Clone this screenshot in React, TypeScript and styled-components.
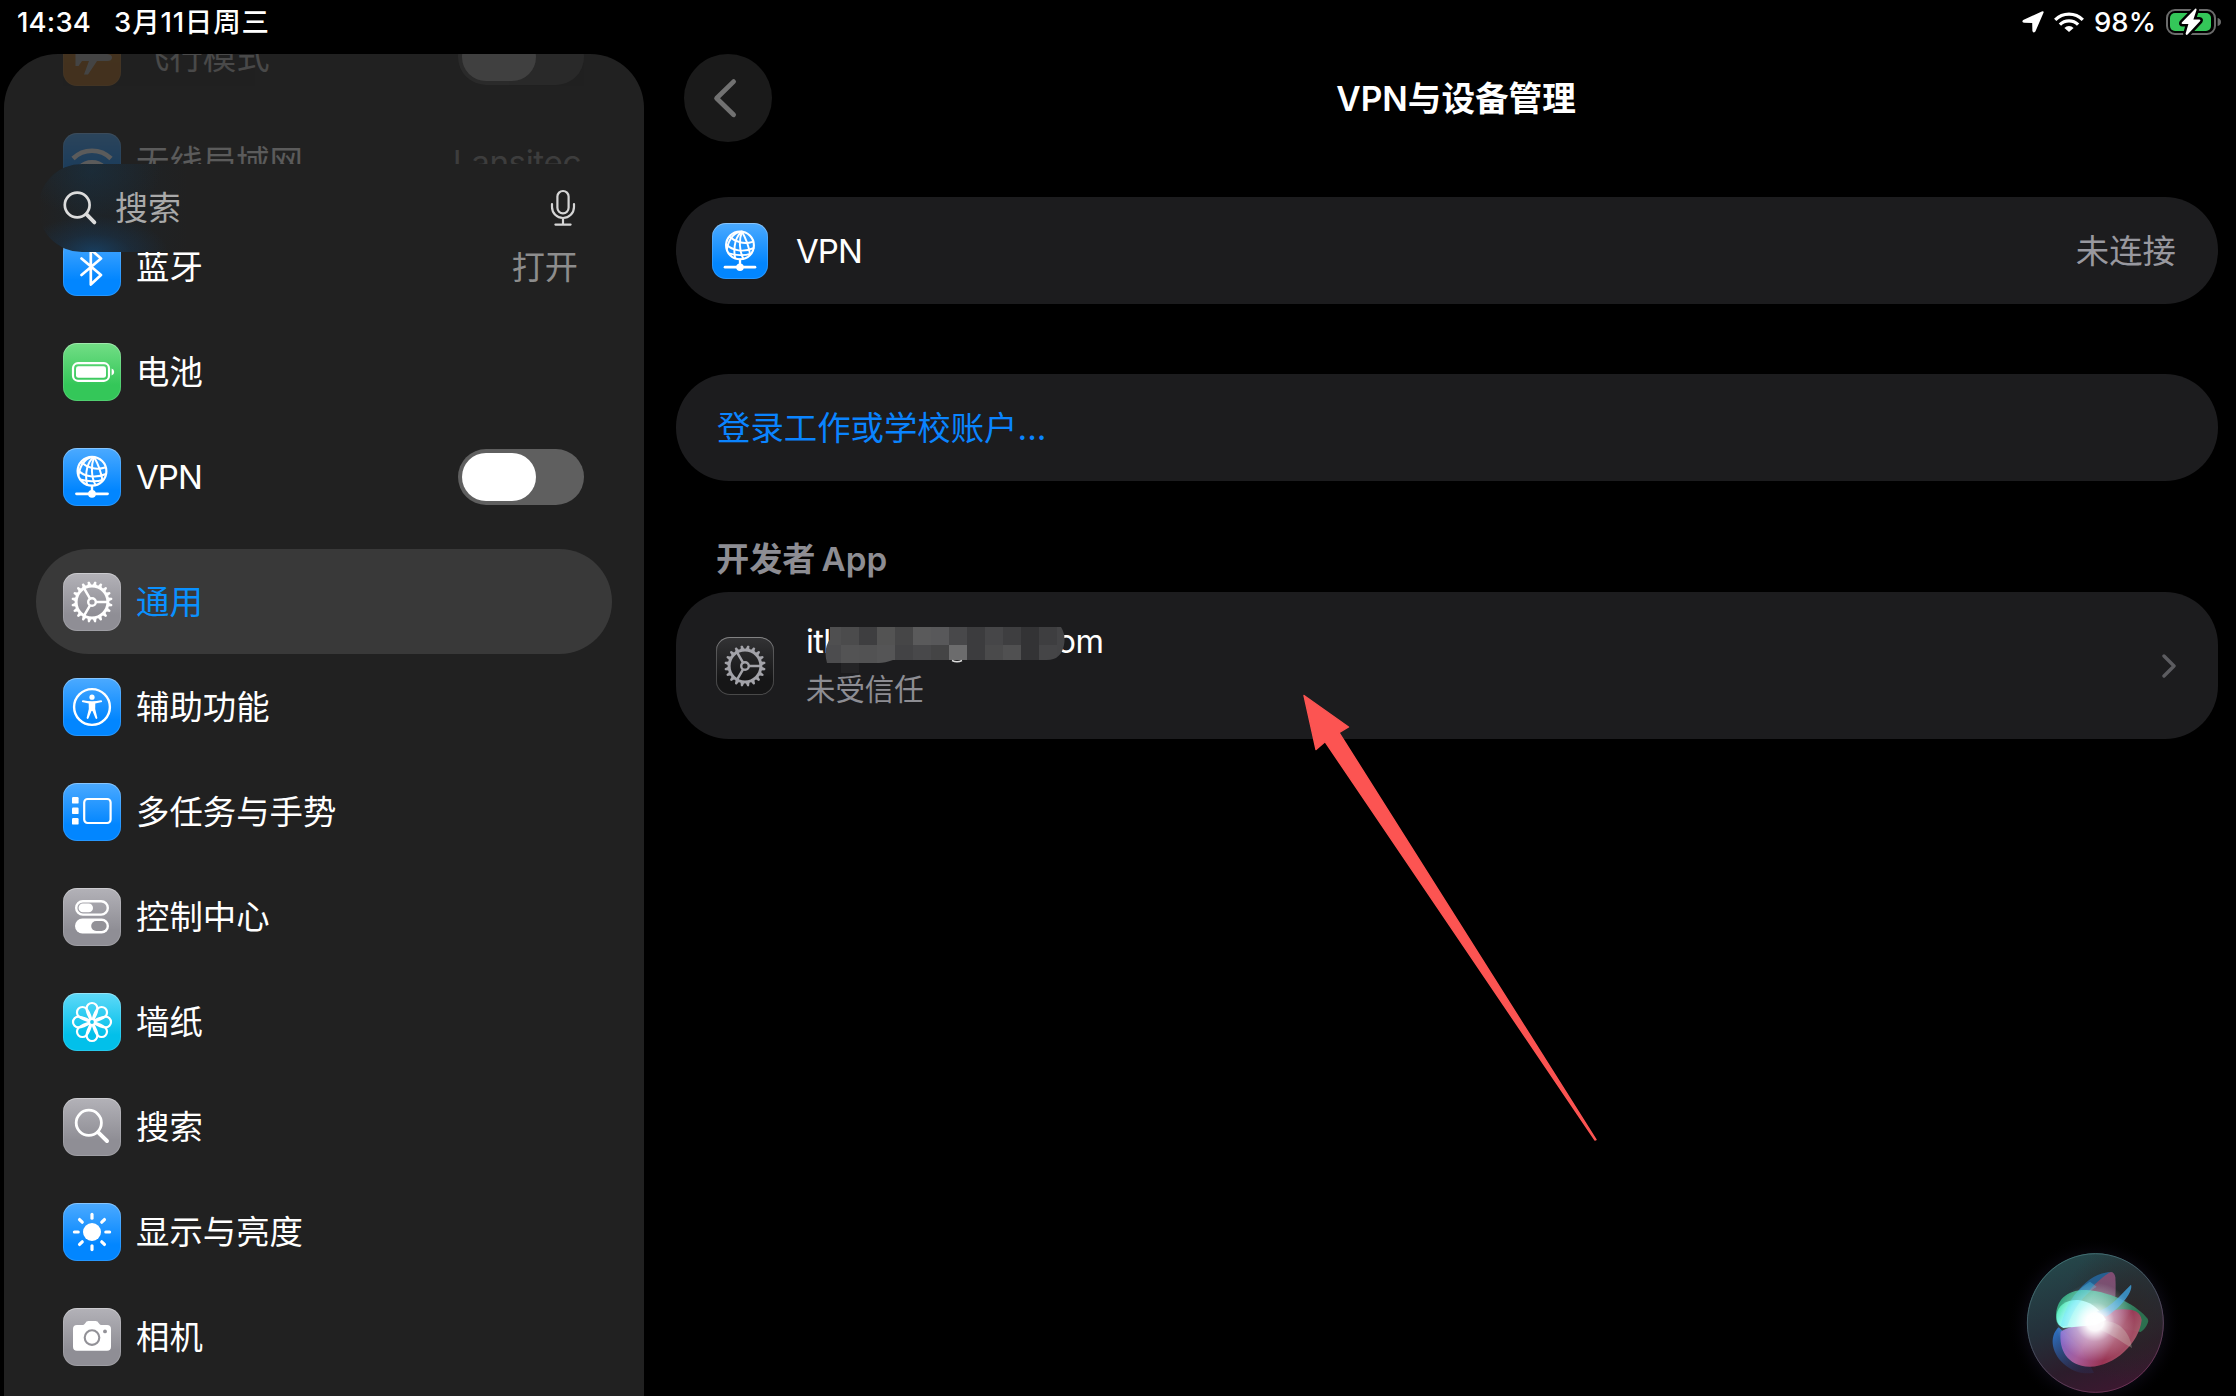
import React from 'react';
import styled, { createGlobalStyle, css } from 'styled-components';

const GlobalStyle = createGlobalStyle`
  * { box-sizing: border-box; }
  html, body { margin: 0; background: #000; }
  body {
    font-family: Inter, 'Noto Sans CJK SC', sans-serif;
    color: #fff;
    overflow: hidden;
  }
  svg { display: block; flex: none; }
`;

/* ---------- frame ---------- */

const Screen = styled.div`
  position: relative;
  width: 2236px;
  height: 1396px;
  background: #000;
  display: flex;
  flex-direction: column;
  overflow: hidden;
`;

const StatusBar = styled.header`
  height: 54px;
  flex: none;
  padding: 0 15px 10px 17px;
  display: flex;
  align-items: center;
  justify-content: space-between;
  font-size: 27.5px;
  font-weight: 500;
  line-height: 44px;
`;

const StatusGroup = styled.div<{ $gap: number }>`
  display: flex;
  align-items: center;
  gap: ${(p) => p.$gap}px;
  white-space: nowrap;
`;

const StatusText = styled.span<{ $spacing?: number }>`
  letter-spacing: ${(p) => p.$spacing ?? 0}px;
`;

const Body = styled.div`
  flex: 1;
  min-height: 0;
  display: flex;
  padding-left: 4px;
  gap: 32px;
`;

/* ---------- sidebar ---------- */

const Sidebar = styled.nav`
  position: relative;
  width: 640px;
  flex: none;
  background: #212121;
  border-radius: 54px 54px 0 0;
  overflow: hidden;
  padding: 0 32px;
`;

const SidebarList = styled.div`
  margin-top: -50px;
  display: flex;
  flex-direction: column;
`;

const Row = styled.div<{ $selected?: boolean; $dim?: number }>`
  height: 105px;
  flex: none;
  padding: 1px 28px 0 27px;
  display: flex;
  align-items: center;
  gap: 15px;
  opacity: ${(p) => p.$dim ?? 1};
  ${(p) =>
    p.$selected &&
    css`
      margin-top: 20px;
      border-radius: 53px;
      background: #393939;
      color: #0a91ff;
    `}
`;

const RowLabel = styled.span<{ $latin?: boolean; $faint?: boolean }>`
  flex: 1;
  font-size: ${(p) => (p.$latin ? 33 : 33.4)}px;
  line-height: 48px;
  white-space: nowrap;
  letter-spacing: ${(p) => (p.$latin ? '-0.9px' : '0')};
  opacity: ${(p) => (p.$faint ? 0.2 : 1)};
`;

const RowValue = styled.span<{ $latin?: boolean }>`
  font-size: 33.2px;
  line-height: 48px;
  color: #8d8d8d;
  padding-right: ${(p) => (p.$latin ? 3 : 6)}px;
  letter-spacing: ${(p) => (p.$latin ? '-0.4px' : '0')};
`;

const tints = {
  orange: ['#ff9f2e', '#f28a14'],
  blue: ['#4caaff', '#0286ff'],
  green: ['#73de86', '#34c759'],
  grey: ['#b3b2b8', '#8f8e95'],
  cyan: ['#5fd9f8', '#02c0ea'],
  dark: ['#333335', '#161617'],
};

const Tile = styled.div<{ $tint: keyof typeof tints; $size?: number; $faint?: boolean }>`
  width: ${(p) => p.$size ?? 58}px;
  height: ${(p) => p.$size ?? 58}px;
  flex: none;
  border-radius: 14px;
  opacity: ${(p) => (p.$faint ? 0.18 : 1)};
  background: linear-gradient(${(p) => tints[p.$tint][0]}, ${(p) => tints[p.$tint][1]} 72%);
  box-shadow:
    inset 0 0 0 1px rgba(255, 255, 255, ${(p) => (p.$tint === 'dark' ? 0.22 : 0.14)}),
    inset 0 1px 0 rgba(255, 255, 255, 0.22);
  svg { width: 100%; height: 100%; }
`;

const Track = styled.div<{ $faded?: boolean }>`
  width: 126px;
  height: 56px;
  border-radius: 28px;
  padding: 4px;
  background: ${(p) => (p.$faded ? '#2b2b2b' : '#5f5f5f')};
`;

const Knob = styled.div<{ $faded?: boolean }>`
  width: 74px;
  height: 48px;
  border-radius: 24px;
  background: ${(p) => (p.$faded ? '#444' : '#fff')};
`;

const SearchField = styled.div`
  position: absolute;
  left: 34px;
  right: 34px;
  top: 110px;
  height: 88px;
  border-radius: 44px;
  padding: 0 34px 0 25px;
  display: flex;
  align-items: center;
  background:
    radial-gradient(ellipse 74px 36px at 56px 100%, rgba(22, 72, 116, 0.7), rgba(22, 62, 100, 0.3) 50%, rgba(16, 68, 112, 0) 100%),
    radial-gradient(ellipse 70px 46px at 54px 8%, rgba(26, 50, 68, 0.55), rgba(26, 50, 68, 0) 100%),
    linear-gradient(90deg, rgba(26, 38, 48, 0) 0, rgba(26, 38, 48, 0.55) 50px, rgba(26, 38, 48, 0) 150px),
    #212121;
`;

const SearchText = styled.span`
  flex: 1;
  margin-left: 17px;
  font-size: 33px;
  line-height: 48px;
  color: #a9a9a9;
`;

/* ---------- detail pane ---------- */

const Detail = styled.main`
  width: 1542px;
  display: flex;
  flex-direction: column;
`;

const TitleBar = styled.div`
  height: 88px;
  flex: none;
  padding-left: 8px;
  display: grid;
  grid-template-columns: 88px 1fr 78px;
  align-items: center;
`;

const BackButton = styled.div`
  width: 88px;
  height: 88px;
  border-radius: 50%;
  background: #1a1a1a;
`;

const Title = styled.h1`
  margin: 2px 0 0;
  font-size: 33.6px;
  line-height: 48px;
  font-weight: 600;
  text-align: center;
`;

const Card = styled.section<{ $height: number; $top: number; $inset?: number }>`
  height: ${(p) => p.$height}px;
  margin-top: ${(p) => p.$top}px;
  flex: none;
  border-radius: 53px;
  background: #1c1c1e;
  display: flex;
  align-items: center;
  padding: 0 42px 0 ${(p) => p.$inset ?? 36}px;
`;

const CardLabel = styled.span`
  flex: 1;
  margin-left: 28px;
  font-size: 33px;
  line-height: 48px;
  letter-spacing: -0.9px;
`;

const CardValue = styled.span`
  font-size: 33.4px;
  line-height: 48px;
  color: #98989f;
`;

const LinkText = styled.span`
  margin-left: 5px;
  font-size: 33.4px;
  line-height: 48px;
  color: #0a84ff;
`;

const SectionTitle = styled.h2`
  margin: 54px 0 0 40px;
  height: 48px;
  display: flex;
  gap: 6px;
  font-size: 33.2px;
  line-height: 48px;
  font-weight: 600;
  color: #8d8d93;
`;

const DevInfo = styled.div`
  flex: 1;
  margin-left: 32px;
  display: flex;
  flex-direction: column;
`;

const DevName = styled.div`
  height: 48px;
  display: flex;
  font-size: 32.5px;
  line-height: 48px;
  letter-spacing: -0.6px;
`;

const MaskSlot = styled.div`
  width: 226px;
  height: 48px;
  svg { position: relative; left: -6px; top: 9px; }
`;

const DevStatus = styled.div`
  font-size: 29.4px;
  line-height: 48px;
  color: #8d8d93;
`;

const ArrowOverlay = styled.svg`
  position: absolute;
  left: 1300px;
  top: 690px;
`;

const SiriOverlay = styled.svg`
  position: absolute;
  left: 1980px;
  top: 1220px;
`;

/* ---------- glyphs ---------- */

const Glyph = ({ children }: { children: React.ReactNode }) => (
  <svg viewBox="0 0 58 58" fill="none" stroke="#fff" strokeLinecap="round" strokeLinejoin="round">
    {children}
  </svg>
);

const AirplaneGlyph = () => (
  <Glyph>
    <path
      d="M12.5 22 L15.5 22 L19 26 H26 L21 12 H25 L34 26 H44 Q49 26.5 49 29.5 Q49 33 44 33 H34 L25 46.5 H21 L26 33 H19 L15.5 38 H12.5 Z"
      fill="#fff"
      stroke="none"
    />
  </Glyph>
);

const WifiGlyph = () => (
  <Glyph>
    <g strokeWidth="4.6" strokeLinecap="butt">
      <path d="M10 25.5 A27 27 0 0 1 48 25.5" />
      <path d="M16.8 34.3 A17.4 17.4 0 0 1 41.2 34.3" />
    </g>
    <path d="M22.5 39.5 A9.2 9.2 0 0 1 35.5 39.5 L29 46 Z" fill="#fff" stroke="none" />
  </Glyph>
);

const BluetoothGlyph = () => (
  <Glyph>
    <path d="M18.5 20.5 L38 37 L27.8 46.5 V11.5 L38 20.5 L18.5 37" strokeWidth="2.7" />
  </Glyph>
);

const BatteryGlyph = () => (
  <Glyph>
    <rect x="10" y="20.2" width="36" height="17.6" rx="5" strokeWidth="2.2" />
    <rect x="13" y="23.2" width="30" height="11.6" rx="2.4" fill="#fff" stroke="none" />
    <path d="M48.6 25.5 Q51.2 26.4 51.2 29 Q51.2 31.6 48.6 32.5 Z" fill="#fff" stroke="none" />
  </Glyph>
);

const VpnGlyph = () => (
  <Glyph>
    <g strokeWidth="2">
      <circle cx="29" cy="23.2" r="14.4" strokeWidth="2.2" />
      <path d="M31 9 C25 13 21.5 24 24 36.5" />
      <path d="M31 9 C28 17 28 29 32.5 37" />
      <path d="M31 9 C34 14 38 24 39.5 32.5" />
      <path d="M31 9 C24 9 17.5 15 15.5 27" />
      <path d="M18.5 14.5 C24 19.5 33 22.5 42 19.5" />
      <path d="M14.8 22 C21 29 33 30.5 43 26" />
      <path d="M17.5 31.5 C24 33.5 34 34 39.5 32" />
    </g>
    <path d="M29 38 V45" strokeWidth="2.4" />
    <path d="M13.5 45.8 H44.5" strokeWidth="2.8" />
    <circle cx="29" cy="45.8" r="3.9" fill="#fff" stroke="none" />
  </Glyph>
);

const GearGlyph = ({ color = '#fff' }: { color?: string }) => (
  <svg viewBox="0 0 58 58" fill="none" stroke={color} strokeLinecap="round">
    <circle cx="29" cy="29" r="15.9" strokeWidth="3" />
    {Array.from({ length: 20 }, (_, i) => (
      <path
        key={i}
        d="M26.9 12.9 L28 8.8 Q29 7.8 30 8.8 L31.1 12.9 Z"
        fill={color}
        stroke="none"
        transform={`rotate(${i * 18 + 9} 29 29)`}
      />
    ))}
    <circle cx="29" cy="29" r="3.8" strokeWidth="2.4" />
    {[0, 120, 240].map((a) => (
      <path key={a} d="M33.5 29 H44" strokeWidth="2.5" transform={`rotate(${a} 29 29)`} />
    ))}
  </svg>
);

const AccessibilityGlyph = () => (
  <Glyph>
    <circle cx="29" cy="29" r="17.9" strokeWidth="2.4" />
    <circle cx="29" cy="19.2" r="2.6" fill="#fff" stroke="none" />
    <path
      d="M20 22.3 Q29 24 38 22.3 Q39.6 22.4 39 23.9 L32.3 25.6 L32.2 31 L34.4 40 Q33.8 41.4 32.6 40.6 L29.5 33 H28.5 L25.4 40.6 Q24.2 41.4 23.6 40 L25.8 31 L25.7 25.6 L19 23.9 Q18.4 22.4 20 22.3 Z"
      fill="#fff"
      stroke="none"
    />
  </Glyph>
);

const MultitaskGlyph = () => (
  <Glyph>
    <g fill="#fff" stroke="none">
      <rect x="9" y="14" width="6.6" height="6.6" rx="1.2" />
      <rect x="9" y="24.5" width="6.6" height="6.6" rx="1.2" />
      <rect x="9" y="35" width="6.6" height="6.6" rx="1.2" />
    </g>
    <rect x="21.2" y="16" width="26.4" height="24" rx="3.4" strokeWidth="2.2" />
  </Glyph>
);

const ControlGlyph = () => (
  <Glyph>
    <rect x="13.2" y="13.2" width="31.6" height="13.4" rx="6.7" strokeWidth="2.4" />
    <rect x="15.6" y="15.6" width="14.4" height="8.6" rx="4.3" fill="#fff" stroke="none" />
    <rect x="12" y="30.6" width="34" height="14.8" rx="7.4" fill="#fff" stroke="none" />
    <rect x="28.2" y="33" width="15.4" height="10" rx="5" fill="#929197" stroke="none" />
  </Glyph>
);

const WallpaperGlyph = () => (
  <Glyph>
    {Array.from({ length: 8 }, (_, i) => (
      <path
        key={i}
        d="M29 29 C26 24 23.6 20 23.6 15.4 A5.4 5.4 0 0 1 34.4 15.4 C34.4 20 32 24 29 29"
        strokeWidth="2.2"
        transform={`rotate(${i * 45} 29 29)`}
      />
    ))}
    <circle cx="29" cy="29" r="2.9" fill="#19c6ee" strokeWidth="2" />
  </Glyph>
);

const SearchGlyph = () => (
  <Glyph>
    <circle cx="25.8" cy="24.8" r="12.6" strokeWidth="2.8" />
    <path d="M35.2 34.4 L44 43" strokeWidth="4" />
  </Glyph>
);

const BrightnessGlyph = () => (
  <Glyph>
    <circle cx="29" cy="29" r="9" fill="#fff" stroke="none" />
    {Array.from({ length: 8 }, (_, i) => (
      <path key={i} d="M29 11.4 V15.2" strokeWidth="3.2" transform={`rotate(${i * 45} 29 29)`} />
    ))}
  </Glyph>
);

const CameraGlyph = () => (
  <Glyph>
    <path
      d="M14 17 H19.5 Q21 17 22 15.4 Q23.3 13 25.5 13 H32.5 Q34.7 13 36 15.4 Q37 17 38.5 17 H44 Q48 17 48 21 V38.8 Q48 42.8 44 42.8 H14 Q10 42.8 10 38.8 V21 Q10 17 14 17 Z"
      fill="#fff"
      stroke="none"
    />
    <circle cx="29" cy="29.6" r="7.3" stroke="#929197" strokeWidth="2.1" />
    <circle cx="42" cy="23.4" r="1.9" fill="#929197" stroke="none" />
  </Glyph>
);

const StatusIcons = {
  Location: () => (
    <svg width="22" height="22" viewBox="0 0 22 22">
      <path
        d="M21.6 1.6 L13.4 20.4 Q11.2 22.6 10.4 20 L10.2 12 L2 11.8 Q-0.8 11 1.2 9 L19.8 0.4 Q22 -0.2 21.6 1.6 Z"
        fill="#fff"
      />
    </svg>
  ),
  Wifi: () => (
    <svg width="30" height="20" viewBox="0 0 30 20" fill="none" stroke="#fff" strokeWidth="3.3">
      <path d="M1.2 7.8 A19.5 19.5 0 0 1 28.8 7.8" />
      <path d="M5.9 12.6 A12.8 12.8 0 0 1 24.1 12.6" />
      <path d="M10.4 16 A6.5 6.5 0 0 1 19.6 16 L15 20 Z" fill="#fff" stroke="none" />
    </svg>
  ),
  Battery: () => (
    <svg width="55" height="28" viewBox="0 0 55 28">
      <rect x="1" y="2" width="48" height="24" rx="8" fill="none" stroke="#6b6b6b" strokeWidth="2" />
      <rect x="4" y="5" width="41" height="18" rx="5" fill="#34c759" />
      <path d="M51.6 10 Q55 10.8 55 14 Q55 17.2 51.6 18 Z" fill="#6b6b6b" />
      <path
        d="M29.2 0.8 L15.8 14.6 Q15 16 16.6 16 H22.4 L19.6 25.8 Q20 27.6 21.6 26.6 L34.2 13 Q35 11.4 33.4 11.4 H27.4 L30.6 1.8 Q30.2 0 29.2 0.8 Z"
        fill="#fff"
        stroke="#000"
        strokeWidth="5"
        paintOrder="stroke"
      />
    </svg>
  ),
};

const maskRows = [
  ['#4f4f50', '#4b4b4c', '#3e3e40', '#535353', '#464647', '#5a5a5b', '#58585a', '#48484a', '#3c3c3e', '#464648', '#3e3e40', '#333335', '#3e3e40', '#444446'],
  ['#4c4c4e', '#535354', '#525253', '#555556', '#434345', '#48484a', '#444445', '#6c6c6d', '#3c3c3e', '#4a4a4b', '#505051', '#333335', '#454547', '#444446'],
];

const NameMask = () => (
  <svg width="242" height="50" viewBox="0 0 242 50">
    <defs>
      <clipPath id="maskShape">
        <path d="M5 0 H236 Q241 8 239 18 Q236 33 222 33 H68 Q60 36 54 36 H2 Q-2 22 5 12 Z" />
      </clipPath>
    </defs>
    <g clipPath="url(#maskShape)" shapeRendering="crispEdges">
      {maskRows.map((row, r) =>
        row.map((fill, c) => (
          <rect key={`${r}-${c}`} x={c * 18 - 2} y={r * 18} width="18" height="18" fill={fill} />
        )),
      )}
    </g>
    <rect x="16" y="36" width="18" height="10" fill="#242426" />
    <path d="M127 33.5 Q132 36 137 33.5" stroke="#ddd" strokeWidth="1.4" fill="none" />
  </svg>
);

const SiriOrb = () => (
  <SiriOverlay width="256" height="176" viewBox="0 0 768 528">
    <defs>
      <linearGradient id="orbFill" x1="0.3" y1="0" x2="0.65" y2="1">
        <stop offset="0" stopColor="#25484b" />
        <stop offset="0.45" stopColor="#24303a" />
        <stop offset="0.75" stopColor="#2c1c2b" />
        <stop offset="1" stopColor="#3c1830" />
      </linearGradient>
      <linearGradient id="orbRim" x1="0.2" y1="0" x2="0.7" y2="1">
        <stop offset="0" stopColor="#3f7676" />
        <stop offset="0.5" stopColor="#454b5c" />
        <stop offset="1" stopColor="#6b2e52" />
      </linearGradient>
      <radialGradient id="orbShade" cx="0.75" cy="0.42" r="0.5">
        <stop offset="0" stopColor="#2c2727" stopOpacity="0.9" />
        <stop offset="1" stopColor="#2c2727" stopOpacity="0" />
      </radialGradient>
      <radialGradient id="core">
        <stop offset="0" stopColor="#fff" />
        <stop offset="0.22" stopColor="#fff" stopOpacity="0.96" />
        <stop offset="0.5" stopColor="#fff" stopOpacity="0.42" />
        <stop offset="1" stopColor="#fff" stopOpacity="0" />
      </radialGradient>
      <linearGradient id="petalPink" x1="0" y1="0.2" x2="1" y2="0.6">
        <stop offset="0" stopColor="#7d6fe0" />
        <stop offset="0.4" stopColor="#b0609f" />
        <stop offset="0.7" stopColor="#a03556" />
        <stop offset="1" stopColor="#b46a78" />
      </linearGradient>
      <linearGradient id="petalMint" x1="0" y1="0" x2="1" y2="0.4">
        <stop offset="0" stopColor="#3fe08c" />
        <stop offset="0.35" stopColor="#7df5ef" />
        <stop offset="1" stopColor="#e0ffff" />
      </linearGradient>
      <linearGradient id="petalGreen" x1="0" y1="0" x2="1" y2="0.3">
        <stop offset="0" stopColor="#2fae7e" />
        <stop offset="0.4" stopColor="#55c8a8" />
        <stop offset="1" stopColor="#2c7a54" />
      </linearGradient>
      <linearGradient id="petalMauve" x1="0.6" y1="0" x2="0.4" y2="1">
        <stop offset="0" stopColor="#8a4f78" />
        <stop offset="1" stopColor="#5f6670" />
      </linearGradient>
      <linearGradient id="petalBlue" x1="0" y1="0" x2="0.7" y2="1">
        <stop offset="0" stopColor="#2f78cf" />
        <stop offset="1" stopColor="#2a3566" stopOpacity="0.3" />
      </linearGradient>
      <radialGradient id="aura">
        <stop offset="0.75" stopColor="#0c0a14" />
        <stop offset="1" stopColor="#000" stopOpacity="0" />
      </radialGradient>
    </defs>
    <ellipse cx="346" cy="312" rx="262" ry="262" fill="url(#aura)" />
    <ellipse cx="346" cy="309" rx="205" ry="209" fill="url(#orbFill)" />
    <ellipse cx="346" cy="309" rx="205" ry="209" fill="url(#orbShade)" />
    <ellipse cx="346" cy="309" rx="204" ry="208" fill="none" stroke="url(#orbRim)" strokeWidth="3" />
    <path d="M236 322 C205 350 215 405 258 437 C290 462 320 462 342 458 L300 380 Z" fill="url(#petalBlue)" />
    <path d="M246 310 C270 230 340 164 392 156 C400 156 404 162 406 172 C408 205 408 240 396 300 L330 320 Z" fill="url(#petalMauve)" opacity="0.9" />
    <path d="M242 318 C262 240 320 158 392 156 C350 180 310 225 262 310 Z" fill="#255f90" />
    <path
      d="M228 290 C228 240 260 208 320 210 C400 216 475 260 503 296 Q507 303 503 310 C498 322 492 330 482 336 L345 310 L250 322 C235 318 228 308 228 290 Z"
      fill="url(#petalGreen)"
      opacity="0.88"
    />
    <path
      d="M242 335 C236 390 262 437 328 440 C400 442 478 370 485 300 C482 276 462 268 430 268 C390 268 350 285 335 300 C300 316 260 322 242 335 Z"
      fill="url(#petalPink)"
      opacity="0.93"
    />
    <path
      d="M230 285 C232 255 262 238 295 240 C330 244 355 262 378 300 L345 315 L250 324 C234 316 229 304 230 285 Z"
      fill="url(#petalMint)"
    />
    <path d="M350 275 C395 262 420 225 453 194 C460 210 430 258 378 290 Z" fill="#3da2df" opacity="0.8" />
    <path d="M362 305 C410 298 448 330 456 384 C430 370 398 345 362 330 Z" fill="#c5b9b0" opacity="0.35" />
    <path d="M242 318 C262 240 290 210 330 185 L350 200 C310 225 280 265 262 318 Z" fill="#49d8ff" opacity="0.3" />
    <circle cx="345" cy="306" r="118" fill="url(#core)" />
  </SiriOverlay>
);

/* ---------- data ---------- */

const settings: { label: string; tint: keyof typeof tints; icon: React.ReactNode; selected?: boolean }[] = [
  { label: '通用', tint: 'grey', icon: <GearGlyph />, selected: true },
  { label: '辅助功能', tint: 'blue', icon: <AccessibilityGlyph /> },
  { label: '多任务与手势', tint: 'blue', icon: <MultitaskGlyph /> },
  { label: '控制中心', tint: 'grey', icon: <ControlGlyph /> },
  { label: '墙纸', tint: 'cyan', icon: <WallpaperGlyph /> },
  { label: '搜索', tint: 'grey', icon: <SearchGlyph /> },
  { label: '显示与亮度', tint: 'blue', icon: <BrightnessGlyph /> },
  { label: '相机', tint: 'grey', icon: <CameraGlyph /> },
];

export default function App() {
  return (
    <>
      <GlobalStyle />
      <Screen>
        <StatusBar>
          <StatusGroup $gap={23}>
            <StatusText $spacing={0.2}>14:34</StatusText>
            <StatusText $spacing={0.8}>3月11日周三</StatusText>
          </StatusGroup>
          <StatusGroup $gap={10}>
            <StatusIcons.Location />
            <StatusIcons.Wifi />
            <StatusText>98%</StatusText>
            <StatusIcons.Battery />
          </StatusGroup>
        </StatusBar>

        <Body>
          <Sidebar>
            <SidebarList>
              <Row $dim={0.9}>
                <Tile $tint="orange" $faint><AirplaneGlyph /></Tile>
                <RowLabel $faint>飞行模式</RowLabel>
                <Track $faded><Knob $faded /></Track>
              </Row>
              <Row $dim={0.26}>
                <Tile $tint="blue"><WifiGlyph /></Tile>
                <RowLabel>无线局域网</RowLabel>
                <RowValue $latin>Lansitec</RowValue>
              </Row>
              <Row>
                <Tile $tint="blue"><BluetoothGlyph /></Tile>
                <RowLabel>蓝牙</RowLabel>
                <RowValue>打开</RowValue>
              </Row>
              <Row>
                <Tile $tint="green"><BatteryGlyph /></Tile>
                <RowLabel>电池</RowLabel>
              </Row>
              <Row>
                <Tile $tint="blue"><VpnGlyph /></Tile>
                <RowLabel $latin>VPN</RowLabel>
                <Track><Knob /></Track>
              </Row>
              {settings.map((s) => (
                <Row key={s.label} $selected={s.selected}>
                  <Tile $tint={s.tint}>{s.icon}</Tile>
                  <RowLabel>{s.label}</RowLabel>
                </Row>
              ))}
            </SidebarList>
            <SearchField>
              <svg width="35" height="35" viewBox="0 0 35 35" fill="none" stroke="#dcdcdc" strokeLinecap="round">
                <circle cx="14.2" cy="14" r="12.4" strokeWidth="2.7" />
                <path d="M23.6 23.4 L31.4 31.4" strokeWidth="3.8" />
              </svg>
              <SearchText>搜索</SearchText>
              <svg width="26" height="38" viewBox="0 0 26 38" fill="none" stroke="#d6d6d6" strokeWidth="2.2" strokeLinecap="round">
                <rect x="7.4" y="2" width="11.2" height="22.4" rx="5.6" />
                <path d="M2 15 V18 A11 11 0 0 0 24 18 V15 M13 29.4 V35.6 M5.4 35.6 H20.6" />
              </svg>
            </SearchField>
          </Sidebar>

          <Detail>
            <TitleBar>
              <BackButton>
                <svg width="88" height="88" viewBox="0 0 88 88" fill="none" stroke="#717171" strokeWidth="4.8" strokeLinecap="round" strokeLinejoin="round">
                  <path d="M49.6 27.6 L32.6 44.2 L49.6 60.8" />
                </svg>
              </BackButton>
              <Title>VPN与设备管理</Title>
            </TitleBar>

            <Card $height={107} $top={55}>
              <Tile $tint="blue" $size={56}><VpnGlyph /></Tile>
              <CardLabel>VPN</CardLabel>
              <CardValue>未连接</CardValue>
            </Card>

            <Card $height={107} $top={70}>
              <LinkText>登录工作或学校账户...</LinkText>
            </Card>

            <SectionTitle>
              <span>开发者</span>
              <span>App</span>
            </SectionTitle>
            <Card $height={147} $top={9} $inset={40}>
              <Tile $tint="dark"><GearGlyph color="#a3a3a9" /></Tile>
              <DevInfo>
                <DevName>
                  <span>itl</span>
                  <MaskSlot><NameMask /></MaskSlot>
                  <span>om</span>
                </DevName>
                <DevStatus>未受信任</DevStatus>
              </DevInfo>
              <svg width="14" height="26" viewBox="0 0 14 26" fill="none" stroke="#5c5c60" strokeWidth="3.4" strokeLinecap="round" strokeLinejoin="round">
                <path d="M2 3 L12 13 L2 23" />
              </svg>
            </Card>
          </Detail>
        </Body>

        <ArrowOverlay width="300" height="455" viewBox="0 0 300 455">
          <path
            d="M4 5.5 L48.5 37 L39 42.6 L296 449.6 L295 450 L25 51.6 L16 59.5 Z"
            fill="#fc5452"
            stroke="#fc5452"
            strokeWidth="1.4"
            strokeLinejoin="round"
          />
        </ArrowOverlay>
        <SiriOrb />
      </Screen>
    </>
  );
}
